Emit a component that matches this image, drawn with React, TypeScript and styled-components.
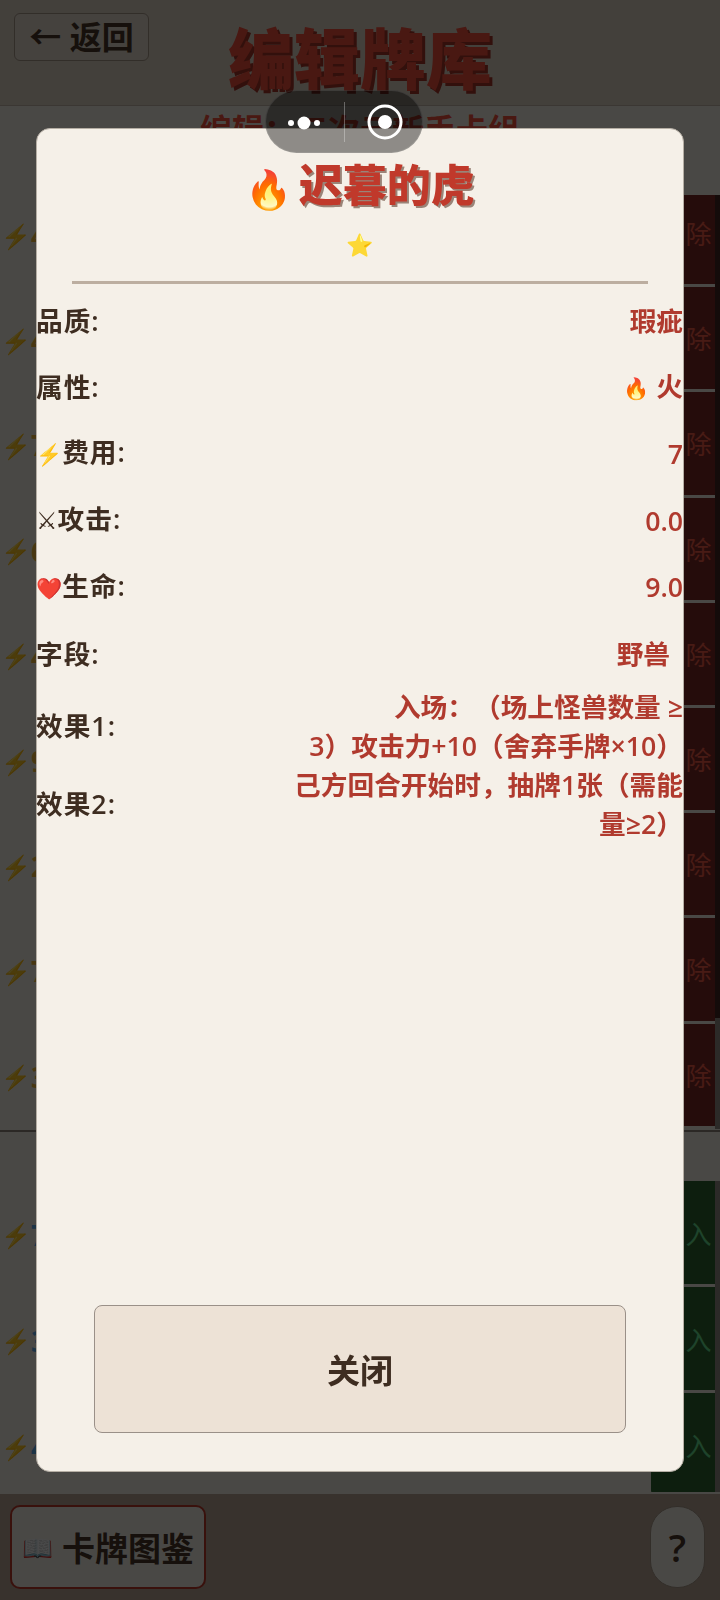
import React from 'react';
import styled, { createGlobalStyle } from 'styled-components';

const GlobalStyle = createGlobalStyle`
  html, body {
    margin: 0;
    padding: 0;
    height: 100%;
  }
  body {
    background: #f5f0e8;
    font-family: "Open Sans", "Noto Sans CJK SC", "Noto Color Emoji", sans-serif;
    text-spacing-trim: space-all;
  }
  * {
    box-sizing: border-box;
  }
`;

const Page = styled.div`
  width: 720px;
  height: 1600px;
  display: flex;
  flex-direction: column;
  overflow: hidden;
  background: #f5f0e8;
`;

const Header = styled.header`
  height: 106px;
  flex: none;
  display: grid;
  grid-template-columns: 1fr auto 1fr;
  align-items: start;
  padding: 13px 14px 0;
  background: #e0d5c7;
  border-bottom: 1px solid #c5baac;
`;

const BackButton = styled.button`
  justify-self: start;
  width: 135px;
  height: 48px;
  padding: 0;
  font-family: inherit;
  font-size: 32px;
  font-weight: 700;
  line-height: 44px;
  white-space: nowrap;
  color: #4a3728;
  background: #e6dccf;
  border: 1px solid #a89a8a;
  border-radius: 6px;
`;

const PageTitle = styled.h1`
  margin: 0;
  font-size: 66px;
  font-weight: 900;
  line-height: 90px;
  color: #f5503c;
  text-shadow: 3px 3px 0 #a8382a;
`;

const SubTitle = styled.div`
  flex: none;
  height: 89px;
  padding-top: 2px;
  text-align: center;
  font-size: 32px;
  font-weight: 700;
  line-height: 44px;
  color: #f5503c;
`;

const ListClip = styled.div<{ $height: number }>`
  position: relative;
  flex: none;
  height: ${p => p.$height}px;
  overflow: hidden;
`;

const ListInner = styled.div<{ $offset?: number; $gap: number; $rowHeight: number }>`
  display: flex;
  flex-direction: column;
  gap: ${p => p.$gap}px;
  margin-top: ${p => p.$offset ?? 0}px;
  & > * {
    height: ${p => p.$rowHeight}px;
  }
`;

const CardRow = styled.div`
  flex: none;
  display: flex;
  align-items: stretch;
  justify-content: space-between;
`;

const Cost = styled.div<{ $blue?: boolean }>`
  display: flex;
  align-items: center;
  padding: 4px 0 0 1px;
  font-size: 28px;
  font-weight: 700;
  color: ${p => (p.$blue ? '#5fb0ea' : '#f0b83c')};
`;

const Bolt = styled.span`
  font-size: 24px;
`;

const RowAction = styled.button<{ $add?: boolean }>`
  width: 69px;
  padding: 0;
  border: none;
  border-radius: 6px 0 0 6px;
  font-family: inherit;
  font-size: 26px;
  letter-spacing: 3px;
  white-space: nowrap;
  color: ${p => (p.$add ? '#66e090' : '#f05a46')};
  background: ${p => (p.$add ? '#2e6630' : '#7d2a26')};
`;

const Track = styled.div`
  position: absolute;
  top: 0;
  right: 0;
  bottom: 0;
  width: 5px;
  background: #938c85;
`;

const Thumb = styled.div<{ $height: number }>`
  width: 100%;
  height: ${p => p.$height}px;
  background: #432524;
`;

const Rule = styled.div`
  flex: none;
  height: 3px;
  border-bottom: 2px solid #8f877d;
`;

const SectionBar = styled.div`
  flex: none;
  height: 49px;
`;

const BottomBar = styled.footer`
  flex: 1;
  display: flex;
  align-items: center;
  justify-content: space-between;
  margin-top: 2px;
  padding: 0 15px 0 10px;
  background: #bba796;
`;

const GuideButton = styled.button`
  width: 196px;
  height: 84px;
  padding: 0;
  display: flex;
  align-items: center;
  justify-content: center;
  gap: 9px;
  font-family: inherit;
  font-size: 33px;
  font-weight: 700;
  white-space: nowrap;
  color: #4a3728;
  background: #f5f0e8;
  border: 2px solid #c0392b;
  border-radius: 10px;
`;

const GuideIcon = styled.span`
  font-size: 25px;
`;

const HelpButton = styled.button`
  width: 55px;
  height: 82px;
  padding: 0;
  font-family: inherit;
  font-size: 38px;
  font-weight: 600;
  color: #4a3728;
  background: #f5f0e8;
  border: 1px solid #a89a8a;
  border-radius: 27px;
`;

const Overlay = styled.div`
  position: fixed;
  inset: 0;
  display: flex;
  align-items: center;
  justify-content: center;
  background: rgba(0, 0, 0, 0.7);
`;

const Modal = styled.section`
  width: 648px;
  height: 1344px;
  display: flex;
  flex-direction: column;
  background: #f5f0e8;
  border: 1px solid #b5aea4;
  border-radius: 14px;
`;

const CardName = styled.h2`
  margin: 21px 0 0;
  display: flex;
  align-items: center;
  justify-content: center;
  gap: 6px;
  font-size: 44px;
  font-weight: 900;
  line-height: 64px;
  color: #c0392b;
  text-shadow: 2px 2px 0 #9a8478;
`;

const NameEmoji = styled.span`
  font-size: 38px;
  text-shadow: none;
  padding-top: 6px;
`;

const Stars = styled.div`
  margin-top: 6px;
  text-align: center;
  font-size: 22px;
  line-height: 36px;
`;

const Divider = styled.hr`
  flex: none;
  height: 3px;
  width: 576px;
  margin: 19px auto 3px;
  border: none;
  background: #bcaea0;
`;

const StatRow = styled.div<{ $flush?: boolean }>`
  flex: none;
  display: flex;
  align-items: center;
  justify-content: space-between;
  height: ${p => (p.$flush ? 'auto' : '66.6px')};
  font-size: 26.7px;
  font-weight: 600;
  line-height: 39px;
`;

const StatLabel = styled.span`
  flex: none;
  margin-left: -1px;
  letter-spacing: 1px;
  color: #3e2d21;
`;

const SmallEmoji = styled.span`
  font-size: 21px;
  letter-spacing: 0;
`;

const SwordGlyph = styled.span`
  font-family: "DejaVu Sans", sans-serif;
  font-size: 24px;
  font-weight: 400;
  letter-spacing: 0;
`;

const StatValue = styled.span<{ $inset?: number }>`
  max-width: 398px;
  padding-right: ${p => p.$inset ?? 0}px;
  text-align: right;
  color: #b03a2e;
`;

const CloseButton = styled.button`
  flex: none;
  width: 532px;
  height: 128px;
  margin: auto auto 38px;
  padding: 0;
  font-family: inherit;
  font-size: 33px;
  font-weight: 600;
  color: #3e2d21;
  background: #ede2d6;
  border: 1px solid #9a9088;
  border-radius: 8px;
`;

const Capsule = styled.div`
  position: fixed;
  top: 90px;
  left: 265px;
  width: 158px;
  height: 63px;
  display: grid;
  grid-template-columns: 78px 1px 1fr;
  align-items: center;
  background: rgba(0, 0, 0, 0.42);
  border: 1px solid rgba(255, 255, 255, 0.1);
  border-radius: 32px;
`;

const CapsuleRule = styled.div`
  height: 40px;
  background: rgba(255, 255, 255, 0.3);
`;

const deckCosts = [4, 4, 7, 6, 4, 9, 2, 7, 3];
const poolCosts = [7, 3, 4];

function App() {
  return (
    <>
      <GlobalStyle />
      <Page>
        <Header>
          <BackButton>← 返回</BackButton>
          <PageTitle>编辑牌库</PageTitle>
        </Header>
        <SubTitle>编辑：三次元新手卡组</SubTitle>
        <ListClip $height={934}>
          <ListInner $offset={-13} $gap={3} $rowHeight={102.2}>
            {deckCosts.map((cost, i) => (
              <CardRow key={i}>
                <Cost><Bolt>⚡</Bolt>{cost}</Cost>
                <RowAction>移除</RowAction>
              </CardRow>
            ))}
          </ListInner>
          <Track><Thumb $height={823} /></Track>
        </ListClip>
        <Rule />
        <SectionBar />
        <ListClip $height={311}>
          <ListInner $gap={3} $rowHeight={103}>
            {poolCosts.map((cost, i) => (
              <CardRow key={i}>
                <Cost $blue><Bolt>⚡</Bolt>{cost}</Cost>
                <RowAction $add>加入</RowAction>
              </CardRow>
            ))}
          </ListInner>
          <Track />
        </ListClip>
        <BottomBar>
          <GuideButton><GuideIcon>📖</GuideIcon>卡牌图鉴</GuideButton>
          <HelpButton>?</HelpButton>
        </BottomBar>
      </Page>
      <Overlay>
        <Modal>
          <CardName><NameEmoji>🔥</NameEmoji>迟暮的虎</CardName>
          <Stars>⭐</Stars>
          <Divider />
          <StatRow><StatLabel>品质:</StatLabel><StatValue>瑕疵</StatValue></StatRow>
          <StatRow><StatLabel>属性:</StatLabel><StatValue><SmallEmoji>🔥</SmallEmoji> 火</StatValue></StatRow>
          <StatRow><StatLabel><SmallEmoji>⚡</SmallEmoji>费用:</StatLabel><StatValue>7</StatValue></StatRow>
          <StatRow><StatLabel><SwordGlyph>{'\u2694\uFE0E'}</SwordGlyph>攻击:</StatLabel><StatValue>0.0</StatValue></StatRow>
          <StatRow><StatLabel><SmallEmoji>❤️</SmallEmoji>生命:</StatLabel><StatValue>9.0</StatValue></StatRow>
          <StatRow><StatLabel>字段:</StatLabel><StatValue $inset={13}>野兽</StatValue></StatRow>
          <StatRow $flush><StatLabel>效果1:</StatLabel><StatValue>入场：（场上怪兽数量 ≥<br />3）攻击力+10（舍弃手牌×10）</StatValue></StatRow>
          <StatRow $flush><StatLabel>效果2:</StatLabel><StatValue>己方回合开始时，抽牌1张（需能量≥2）</StatValue></StatRow>
          <CloseButton>关闭</CloseButton>
        </Modal>
      </Overlay>
      <Capsule>
        <svg width="78" height="20" viewBox="0 0 78 20">
          <circle cx="25" cy="11" r="3" fill="#fff" />
          <circle cx="38" cy="11" r="6.5" fill="#fff" />
          <circle cx="51" cy="11" r="3" fill="#fff" />
        </svg>
        <CapsuleRule />
        <svg width="78" height="42" viewBox="0 0 78 42">
          <circle cx="40" cy="21" r="16" fill="none" stroke="#fff" strokeWidth="3" />
          <circle cx="40" cy="21" r="7" fill="#fff" />
        </svg>
      </Capsule>
    </>
  );
}

export default App;
